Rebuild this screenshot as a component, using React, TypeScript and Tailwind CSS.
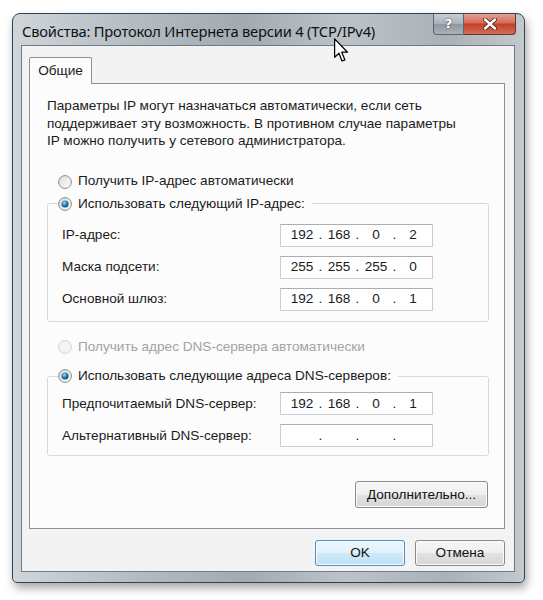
import React from 'react';

const body = "font-['Liberation_Sans',Arial,sans-serif]";

function Radio({ checked, disabled }: { checked?: boolean; disabled?: boolean }) {
  return (
    <svg width="14" height="14" viewBox="0 0 14 14" className="shrink-0">
      <defs>
        <linearGradient id="rb" x1="0" y1="0" x2="1" y2="1">
          <stop offset="0" stopColor="#d9d9d9" />
          <stop offset="1" stopColor="#ffffff" />
        </linearGradient>
        <radialGradient id="dot" cx="0.4" cy="0.35" r="0.7">
          <stop offset="0" stopColor="#9ee0ff" />
          <stop offset="0.45" stopColor="#2b8bc6" />
          <stop offset="1" stopColor="#0d3e63" />
        </radialGradient>
      </defs>
      <circle cx="7" cy="7" r="6.4" fill={disabled ? '#f4f4f4' : 'url(#rb)'} stroke={disabled ? '#d2d2d2' : '#8a8a8a'} strokeWidth="1" />
      {checked && <circle cx="7" cy="7" r="3.6" fill="url(#dot)" />}
    </svg>
  );
}

function IpField({ parts }: { parts: string[] }) {
  return (
    <div className="w-[153px] h-[23px] bg-white border border-[#c9ced3] border-t-[#a9aeb4] flex items-center pl-[6px] text-[#1b1b1b]">
      {parts.map((p, i) => (
        <React.Fragment key={i}>
          <span className="w-[30px] text-center">{p}</span>
          {i < 3 && <span className="w-[7px] text-center">.</span>}
        </React.Fragment>
      ))}
    </div>
  );
}

function Row({ label, parts }: { label: string; parts: string[] }) {
  return (
    <div className="flex items-center h-[23px]">
      <span className="w-[218px]">{label}</span>
      <IpField parts={parts} />
    </div>
  );
}

function VistaButton({ children, primary, className }: { children: React.ReactNode; primary?: boolean; className?: string }) {
  return (
    <button
      className={
        'rounded-[3px] border flex items-center justify-center text-[#111] ' +
        (primary
          ? 'border-[#4a92bf] bg-[linear-gradient(#ecf7fd_0%,#e0f1fb_50%,#cfe9f8_50%,#bfe1f4_100%)] shadow-[inset_0_0_0_1px_#f4fbff] '
          : 'border-[#8a8a8a] bg-[linear-gradient(#f6f6f6_0%,#efefef_50%,#e2e2e2_50%,#d6d6d6_100%)] shadow-[inset_0_0_0_1px_#fbfbfb] ') +
        (className ?? '')
      }
    >
      {children}
    </button>
  );
}

export default function App() {
  return (
    <div className={`w-[543px] h-[600px] bg-white relative overflow-hidden ${body} text-[13.6px] text-[#1b1b1b]`}>
      <div className="pt-[13px] pl-[12px]">
        <div className="w-[513px] h-[570px] rounded-t-[8px] rounded-b-[5px] border border-[#34434e] bg-[linear-gradient(90deg,#cfd5d9_0%,#b3bbc1_25%,#a2abb2_45%,#bcc3c8_65%,#a9b2b8_85%,#c3c9cd_100%)] shadow-[2px_5px_10px_rgba(0,0,0,0.35)] flex flex-col">
          {/* title bar */}
          <div className="h-[31px] flex items-start justify-between pl-[9px] pr-[8px]">
            <span className="mt-[8px] font-['Noto_Sans',sans-serif] text-[14.7px] leading-[18px] tracking-[-0.2px] text-[#111]">
              Свойства: Протокол Интернета версии 4 (TCP/IPv4)
            </span>
            <div className="flex">
              <div className="w-[31px] h-[21px] rounded-bl-[4px] border border-t-0 border-[#5b6670] bg-[linear-gradient(#c8ced2_0%,#a9b1b7_50%,#8f989f_50%,#aab2b8_100%)] flex items-center justify-center font-['DejaVu_Sans',sans-serif] text-[13px] font-bold text-white [text-shadow:0_0_2px_#333]">
                ?
              </div>
              <div className="w-[52px] h-[21px] rounded-br-[4px] border border-t-0 border-l-0 border-[#5b3a34] bg-[linear-gradient(#e3a195_0%,#d56a57_45%,#c2402a_50%,#d56c55_100%)] flex items-center justify-center">
                <svg width="14" height="12" viewBox="0 0 14 12">
                  <path d="M2 1.5 L12 10.5 M12 1.5 L2 10.5" stroke="#4a1a12" strokeWidth="4" strokeLinecap="round" />
                  <path d="M2 1.5 L12 10.5 M12 1.5 L2 10.5" stroke="#ffffff" strokeWidth="2.4" strokeLinecap="round" />
                </svg>
              </div>
            </div>
          </div>

          {/* client area */}
          <div className="flex-1 ml-[8px] mr-[9px] mb-[10px] border border-[#6e7a84] bg-[#f3f3f3] flex flex-col pl-[7px] pr-[9px] pt-[11px]">
            <div className="flex">
              <div className="w-[63px] h-[27px] -mb-px z-10 bg-[#fcfcfc] border border-b-0 border-[#8c9097] rounded-t-[2px] flex items-center justify-center">
                Общие
              </div>
            </div>
            <div className="h-[446px] bg-[#fcfcfc] border border-[#8c9097] pl-[17px] pr-[14px] pt-[13px]">
              <p className="leading-[17.5px]">
                Параметры IP могут назначаться автоматически, если сеть
                <br />
                поддерживает эту возможность. В противном случае параметры
                <br />
                IP можно получить у сетевого администратора.
              </p>

              <div className="mt-[23px] ml-[11px] flex items-center gap-[6px] h-[18px]">
                <Radio />
                <span>Получить IP-адрес автоматически</span>
              </div>

              <fieldset className="mt-[3px] w-[442px] border border-[#d3dbe1] rounded-[3px] pl-[14px] pb-[10px]">
                <legend className="ml-[-4px] pr-[7px] flex items-center gap-[6px]">
                  <Radio checked />
                  <span>Использовать следующий IP-адрес:</span>
                </legend>
                <div className="flex flex-col gap-[9px] mt-[10px]">
                  <Row label="IP-адрес:" parts={['192', '168', '0', '2']} />
                  <Row label="Маска подсети:" parts={['255', '255', '255', '0']} />
                  <Row label="Основной шлюз:" parts={['192', '168', '0', '1']} />
                </div>
              </fieldset>

              <div className="mt-[16px] ml-[11px] flex items-center gap-[6px] h-[18px] text-[#a3a3a3]">
                <Radio disabled />
                <span>Получить адрес DNS-сервера автоматически</span>
              </div>

              <fieldset className="mt-[10px] w-[442px] border border-[#d3dbe1] rounded-[3px] pl-[14px] pb-[8px]">
                <legend className="ml-[-4px] pr-[7px] flex items-center gap-[6px]">
                  <Radio checked />
                  <span>Использовать следующие адреса DNS-серверов:</span>
                </legend>
                <div className="flex flex-col gap-[9px] mt-[6px]">
                  <Row label="Предпочитаемый DNS-сервер:" parts={['192', '168', '0', '1']} />
                  <Row label="Альтернативный DNS-сервер:" parts={['', '', '', '']} />
                </div>
              </fieldset>

              <div className="flex justify-end w-[442px] mt-[25px]">
                <VistaButton className="w-[133px] h-[27px] mr-[1px]">Дополнительно...</VistaButton>
              </div>
            </div>

            <div className="flex justify-end gap-[10px] mt-[11px]">
              <VistaButton primary className="w-[90px] h-[26px]">OK</VistaButton>
              <VistaButton className="w-[90px] h-[26px]">Отмена</VistaButton>
            </div>
          </div>
        </div>
      </div>

      {/* mouse pointer */}
      <svg className="absolute left-[334px] top-[38px]" width="16" height="25" viewBox="0 0 13 20">
        <path d="M0.5 0.5 L0.5 15.5 L4 12.2 L6.5 18.5 L8.8 17.6 L6.3 11.4 L11 11.4 Z" fill="#ffffff" stroke="#000000" strokeWidth="1" strokeLinejoin="round" />
      </svg>
    </div>
  );
}
